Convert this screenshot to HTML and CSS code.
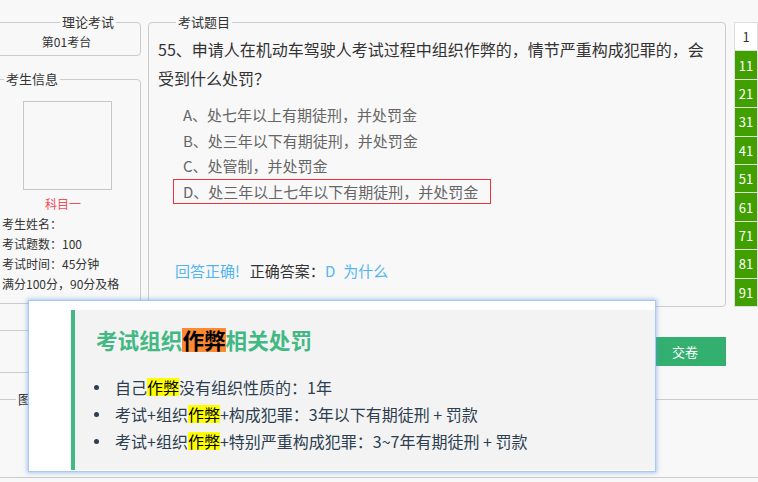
FILE: index.html
```html
<!DOCTYPE html>
<html lang="zh-CN">
<head>
<meta charset="utf-8">
<title>理论考试</title>
<link rel="stylesheet" href="styles.css">
</head>
<body>
<div class="page">
  <div class="top">
    <div class="side">
      <fieldset class="box seat">
        <legend>理论考试</legend>
        <div class="seat-no">第01考台</div>
      </fieldset>
      <fieldset class="box info">
        <legend>考生信息</legend>
        <div class="photo"></div>
        <div class="subject">科目一</div>
        <div class="line">考生姓名：</div>
        <div class="line">考试题数：100</div>
        <div class="line">考试时间：45分钟</div>
        <div class="line">满分100分，90分及格</div>
      </fieldset>
    </div>
    <fieldset class="box question">
      <legend>考试题目</legend>
      <div class="q-text">55、申请人在机动车驾驶人考试过程中组织作弊的，情节严重构成犯罪的，会受到什么处罚？</div>
      <div class="options">
        <div class="opt">A、处七年以上有期徒刑，并处罚金</div>
        <div class="opt">B、处三年以下有期徒刑，并处罚金</div>
        <div class="opt">C、处管制，并处罚金</div>
        <div class="opt selected">D、处三年以上七年以下有期徒刑，并处罚金</div>
      </div>
      <div class="answer"><span class="ok">回答正确!</span><span class="label">正确答案：</span><span class="blue">D</span><span class="blue why">为什么</span></div>
    </fieldset>
    <div class="grid">
      <div class="cell todo">1</div><div class="cell"></div>
      <div class="cell">11</div><div class="cell"></div>
      <div class="cell">21</div><div class="cell"></div>
      <div class="cell">31</div><div class="cell"></div>
      <div class="cell">41</div><div class="cell"></div>
      <div class="cell">51</div><div class="cell"></div>
      <div class="cell">61</div><div class="cell"></div>
      <div class="cell">71</div><div class="cell"></div>
      <div class="cell">81</div><div class="cell"></div>
      <div class="cell">91</div><div class="cell"></div>
    </div>
  </div>
  <div class="toolbar">
    <div class="bar"></div>
    <button class="submit" type="button">交卷</button>
  </div>
  <fieldset class="box pics">
    <legend>图片信息</legend>
  </fieldset>
</div>

<div class="popup">
  <div class="note">
    <h3 class="note-title">考试组织<span class="hl-title">作弊</span>相关处罚</h3>
    <ul class="note-list">
      <li>自己<span class="hl">作弊</span>没有组织性质的：1年</li>
      <li>考试+组织<span class="hl">作弊</span>+构成犯罪：3年以下有期徒刑 + 罚款</li>
      <li>考试+组织<span class="hl">作弊</span>+特别严重构成犯罪：3~7年有期徒刑 + 罚款</li>
    </ul>
  </div>
</div>
</body>
</html>
```

FILE: styles.css
```css
html, body {
  margin: 0;
  padding: 0;
  overflow: hidden;
  width: 758px;
  height: 482px;
}
body {
  background: #f8f8f8;
  color: #333;
  font-family: "Noto Sans CJK SC", "Noto Sans", sans-serif;
  font-size: 12px;
  position: relative;
}
.page {
  padding-top: 13px;
}
.top {
  display: flex;
  align-items: flex-start;
}

/* fieldsets */
.box {
  border: 1px solid #cbcbcb;
  border-radius: 4px;
  margin: 0;
  padding: 0;
  min-width: 0;
  box-sizing: border-box;
}
.box > legend {
  padding: 0 2px;
  font-size: 13px;
  line-height: 18px;
  color: #333;
}

/* left column */
.side {
  width: 157px;
  margin-left: -16px;
  flex: none;
}
.seat {
  height: 43px;
  padding-left: 8px;
}
.seat > legend {
  margin-left: 67px;
}
.seat-no {
  text-align: center;
  line-height: 20px;
  padding-top: 1px;
}
.info {
  margin-top: 14px;
  height: 234px;
  padding-left: 17px;
}
.info > legend {
  margin-left: 2px;
}
.photo {
  width: 89px;
  height: 89px;
  box-sizing: border-box;
  border: 1px solid #c6c6c6;
  margin: 13px 0 0 21px;
}
.subject {
  color: #ee4f5c;
  line-height: 20px;
  margin-top: 4px;
  padding-left: 43px;
}
.line {
  line-height: 20px;
}

/* question */
.question {
  width: 578px;
  height: 294px;
  margin-left: 7px;
  padding: 0 10px 0 9px;
  flex: none;
}
.question > legend {
  margin-left: 18px;
}
.q-text {
  font-size: 16px;
  line-height: 29px;
  margin-top: 4px;
  color: #333;
}
.options {
  margin-top: 9px;
  margin-left: 15px;
}
.opt {
  width: fit-content;
  font-size: 15px;
  line-height: 23.5px;
  color: #666;
  border: 1px solid transparent;
  padding: 0 12px 0 9px;
}
.opt.selected {
  border: 1px solid #e8323c;
}
.answer {
  margin-top: 57px;
  margin-left: 17px;
  font-size: 15px;
  line-height: 20px;
  display: flex;
}
.ok {
  color: #52b5f2;
  margin-right: 10px;
}
.label {
  color: #333;
}
.blue {
  color: #52b5f2;
}
.why {
  margin-left: 8px;
}

/* number grid */
.grid {
  flex: none;
  margin: 9px 0 0 8px;
  display: grid;
  grid-template-columns: repeat(2, 22px);
  grid-auto-rows: 27.4px;
  gap: 1px;
  padding: 1px;
  background: #dedede;
}
.cell {
  background: #41a000;
  color: #fff;
  font-size: 13px;
  display: flex;
  align-items: center;
  justify-content: center;
}
.cell.todo {
  background: #fff;
  color: #333;
}

/* toolbar */
.toolbar {
  display: flex;
  align-items: center;
  margin: 23px 0 0 -16px;
  width: 774px;
}
.bar {
  flex: 1;
  height: 43px;
  box-sizing: border-box;
  border: 1px solid #cbcbcb;
}
.submit {
  width: 82px;
  height: 29px;
  margin: 0 32px 0 14px;
  border: 0;
  background: #33b070;
  color: #fff;
  font-family: "Noto Sans CJK SC", sans-serif;
  font-size: 13px;
  padding: 0;
}

.pics {
  margin: 17px 0 0 -16px;
  width: 790px;
  height: 88px;
}
.pics > legend {
  margin-left: 31px;
}

/* popup */
.popup {
  position: absolute;
  left: 28px;
  top: 300px;
  width: 628px;
  height: 172px;
  box-sizing: border-box;
  background: #fff;
  border: 1px solid #a9c9f3;
  box-shadow: 0 0 4px 1px rgba(90, 150, 235, 0.5);
  padding: 9px 0 1px 42px;
}
.note {
  height: 100%;
  box-sizing: border-box;
  background: #f3f3f3;
  border-left: 4px solid #42b983;
  padding: 15px 20px 0 21px;
  color: #2c3e50;
}
.note-title {
  margin: 0;
  font-size: 21.6px;
  line-height: 30px;
  font-weight: bold;
  color: #42b983;
}
.hl-title {
  display: inline-block;
  line-height: 24px;
  background: #fd8a32;
  color: #000;
}
.note-list {
  margin: 19px 0 0;
  padding-left: 19px;
  font-size: 16px;
  line-height: 27px;
  list-style: none;
}
.note-list li {
  position: relative;
}
.note-list li::before {
  content: "";
  position: absolute;
  left: -21px;
  top: 11px;
  width: 5px;
  height: 5px;
  border-radius: 50%;
  background: #2c3e50;
}
.hl {
  display: inline-block;
  line-height: 18px;
  background: #ffff00;
  color: #000;
}
```
